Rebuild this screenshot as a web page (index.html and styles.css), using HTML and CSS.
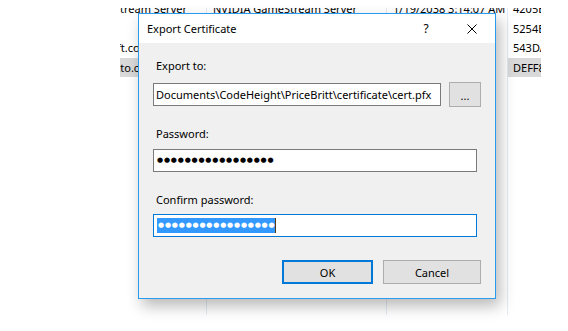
FILE: index.html
```html
<!DOCTYPE html>
<html>
<head>
<meta charset="utf-8">
<link rel="stylesheet" href="styles.css">
</head>
<body>
<div class="list">
  <div class="list-inner">
    <div class="row"><span class="c c1">NVIDIA GameStream Server</span><span class="c c2">NVIDIA GameStream Server</span><span class="c c3">1/19/2038 3:14:07 AM</span><span class="c c4">4205E1A8</span></div>
    <div class="row"><span class="c c1">localhost</span><span class="c c2">localhost</span><span class="c c3">6/12/2031</span><span class="c c4">5254E0B9</span></div>
    <div class="row"><span class="c c1">logon.microsoft.com</span><span class="c c2">Microsoft IT TLS CA 2</span><span class="c c3">2/14/2027</span><span class="c c4">543DA7C2</span></div>
    <div class="row sel"><span class="c c1">server.pricebritto.com</span><span class="c c2">PriceBritt Root CA</span><span class="c c3">8/30/2029</span><span class="c c4">DEFF8A31</span></div>
    <div class="row"><span class="c c1"></span><span class="c c2"></span><span class="c c3"></span><span class="c c4"></span></div>
    <div class="row"><span class="c c1"></span><span class="c c2"></span><span class="c c3"></span><span class="c c4"></span></div>
    <div class="row"><span class="c c1"></span><span class="c c2"></span><span class="c c3"></span><span class="c c4"></span></div>
    <div class="row"><span class="c c1"></span><span class="c c2"></span><span class="c c3"></span><span class="c c4"></span></div>
    <div class="row"><span class="c c1"></span><span class="c c2"></span><span class="c c3"></span><span class="c c4"></span></div>
    <div class="row"><span class="c c1"></span><span class="c c2"></span><span class="c c3"></span><span class="c c4"></span></div>
    <div class="row"><span class="c c1"></span><span class="c c2"></span><span class="c c3"></span><span class="c c4"></span></div>
    <div class="row"><span class="c c1"></span><span class="c c2"></span><span class="c c3"></span><span class="c c4"></span></div>
    <div class="row"><span class="c c1"></span><span class="c c2"></span><span class="c c3"></span><span class="c c4"></span></div>
    <div class="row"><span class="c c1"></span><span class="c c2"></span><span class="c c3"></span><span class="c c4"></span></div>
    <div class="row"><span class="c c1"></span><span class="c c2"></span><span class="c c3"></span><span class="c c4"></span></div>
    <div class="row"><span class="c c1"></span><span class="c c2"></span><span class="c c3"></span><span class="c c4"></span></div>
    <div class="row"><span class="c c1"></span><span class="c c2"></span><span class="c c3"></span><span class="c c4"></span></div>
  </div>
</div>

<div class="dialog">
  <div class="titlebar">
    <span class="title">Export Certificate</span>
    <span class="tb-btn help">?</span>
    <span class="tb-btn close">
      <svg width="10" height="10" viewBox="0 0 10 10"><path d="M0.5 0.5 L9.5 9.5 M9.5 0.5 L0.5 9.5" stroke="#000" stroke-width="1" fill="none"/></svg>
    </span>
  </div>
  <div class="body">
    <div class="label l1">Export to:</div>
    <div class="path-row">
      <div class="field path"><span class="path-text">Documents\CodeHeight\PriceBritt\certificate\cert.pfx</span></div>
      <div class="btn browse">...</div>
    </div>
    <div class="label l2">Password:</div>
    <div class="field pw"><span class="dots">●●●●●●●●●●●●●●●●●</span></div>
    <div class="label l3">Confirm password:</div>
    <div class="field pw focus"><span class="dots selected">●●●●●●●●●●●●●●●●●</span></div>
    <div class="buttons">
      <div class="btn ok">OK</div>
      <div class="btn cancel">Cancel</div>
    </div>
  </div>
</div>
</body>
</html>
```
FILE: styles.css
```css
html, body {
  margin: 0;
  padding: 0;
  background: #fff;
}
body {
  width: 568px;
  height: 331px;
  box-sizing: border-box;
  padding-top: 8px;
  overflow: hidden;
  position: relative;
  font-family: "Noto Sans", "Open Sans", sans-serif;
  font-size: 11px;
  color: #000;
}

/* background list view */
.list {
  margin-left: 120px;
  width: 421px;
  height: 307px;
  overflow: hidden;
}
.list-inner {
  margin-left: -83px;
  margin-top: -9px;
}
.row {
  display: flex;
  height: 19.5px;
  line-height: 19.5px;
  white-space: nowrap;
}
.row.sel .c1,
.row.sel .c4 {
  background: #d9d9d9;
}
.c {
  flex: none;
  overflow: hidden;
  box-sizing: border-box;
  border-right: 1px solid #e3ebf6;
}
.c1 { width: 170px; padding-left: 6px; }
.c2 { width: 180px; padding-left: 6px; }
.c3 { width: 121px; padding-left: 6px; }
.c4 { width: 120px; padding-left: 5px; border-right: none; }

/* dialog window */
.dialog {
  position: absolute;
  left: 138px;
  top: 13px;
  width: 358px;
  height: 286px;
  box-sizing: border-box;
  border: 1px solid #2b9bf0;
  background: #f0f0f0;
  box-shadow: 4px 7px 14px rgba(0, 0, 0, 0.28);
  display: flex;
  flex-direction: column;
}
.titlebar {
  height: 29px;
  background: #fff;
  display: flex;
  align-items: center;
  flex: none;
}
.title {
  padding-left: 8px;
  margin-right: auto;
}
.tb-btn {
  width: 46px;
  height: 29px;
  display: flex;
  align-items: center;
  justify-content: center;
}
.help {
  font-size: 12px;
}
.body {
  flex: 1;
  padding: 15px 14px 0 14px;
  display: flex;
  flex-direction: column;
}
.label {
  height: 16px;
  line-height: 16px;
  padding-left: 3px;
}
.l1 { margin-bottom: 9px; }
.l2 { margin-top: 19px; margin-bottom: 7px; }
.l3 { margin-top: 20px; margin-bottom: 6px; }

.path-row {
  display: flex;
  gap: 8px;
}
.field {
  box-sizing: border-box;
  height: 23px;
  background: #fff;
  border: 1px solid #7a7a7a;
  display: flex;
  align-items: center;
  overflow: hidden;
  white-space: nowrap;
}
.path {
  width: 288px;
  padding-left: 2px;
}
.pw {
  width: 324px;
  padding-left: 3px;
}
.focus {
  border-color: #0078d7;
}
.dots {
  font-family: "DejaVu Sans", sans-serif;
  font-size: 7px;
  letter-spacing: 0.8px;
  height: 15px;
  line-height: 15px;
}
.selected {
  background: #3399ff;
  color: #fff;
  padding-left: 1px;
  border-right: 1px solid #5a3a10;
}

.btn {
  box-sizing: border-box;
  height: 24px;
  background: #e1e1e1;
  border: 1px solid #adadad;
  display: flex;
  align-items: center;
  justify-content: center;
}
.browse {
  width: 32px;
  height: 25px;
  margin-top: -1px;
  padding-top: 2px;
}
.buttons {
  display: flex;
  justify-content: flex-end;
  gap: 10px;
  margin-top: 23px;
}
.ok {
  width: 91px;
  border: 2px solid #0078d7;
}
.cancel {
  width: 98px;
}
```
